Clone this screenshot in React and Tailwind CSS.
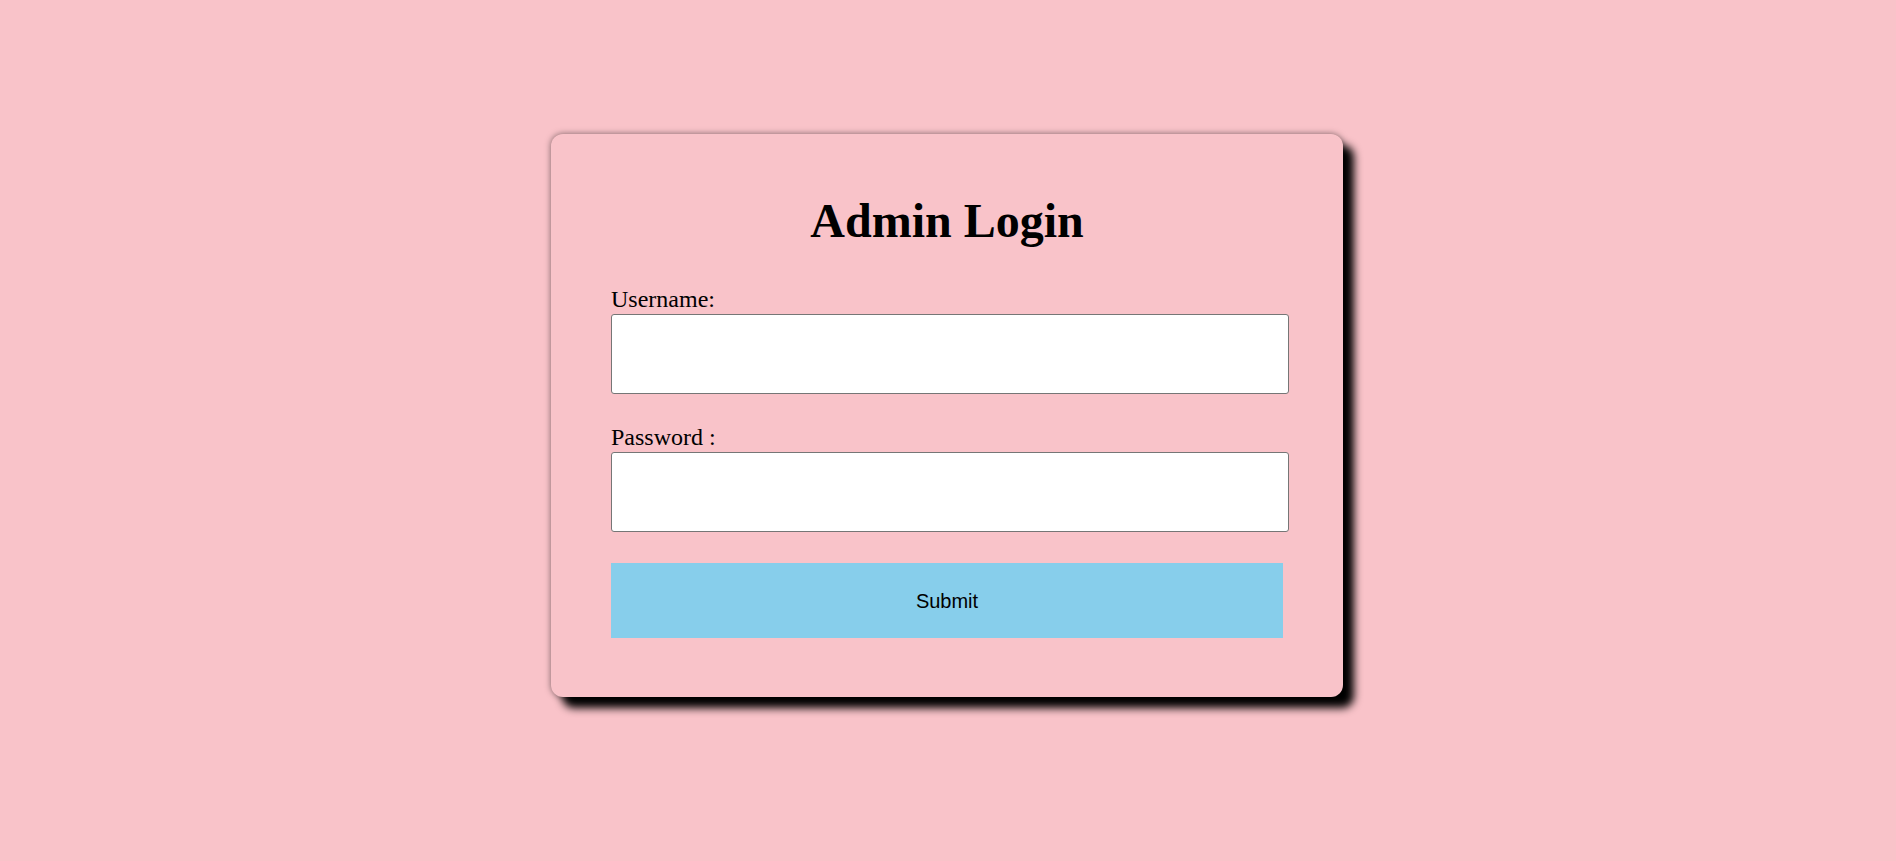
export default function App() {
  return (
    <div className="min-h-screen w-full bg-[#f9c3c9] flex justify-center pt-[134px] pr-[2px] font-['Liberation_Serif',serif]">
      {/* Login card */}
      <div className="w-[792px] h-[563px] bg-[#f9c3c9] rounded-xl px-[60px] pt-[60px] shadow-[11px_11px_8px_#000,0_0_6px_rgba(0,0,0,0.5)]">
        <h1 className="text-[48px] font-bold text-black text-center leading-[53px] mb-[39px]">
          Admin Login
        </h1>

        <label className="block text-[24px] leading-[27px] text-black">Username:</label>
        <input
          type="text"
          className="block w-[678px] h-[80px] bg-white border border-[#767676] rounded-[3px] mt-px mb-[30px]"
        />

        <label className="block text-[24px] leading-[27px] text-black">Password :</label>
        <input
          type="password"
          className="block w-[678px] h-[80px] bg-white border border-[#767676] rounded-[3px] mt-px"
        />

        <button className="block w-[672px] h-[75px] mt-[31px] bg-[#87ceeb] text-black text-[20px] font-['Liberation_Sans',Arial,sans-serif]">
          Submit
        </button>
      </div>
    </div>
  );
}
